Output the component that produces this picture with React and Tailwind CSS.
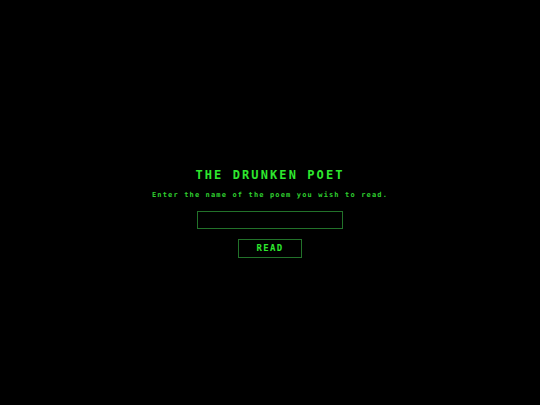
import React, { useState } from 'react';

const App = () => {
  const [poem, setPoem] = useState('');

  return (
    <div className="min-h-screen w-full bg-black flex flex-col items-center pt-[167px] font-['DejaVu_Sans_Mono',monospace]">
      <h1 className="text-[12px] leading-[16px] font-bold tracking-[2.1px] text-[#2ee82e]">
        THE DRUNKEN POET
      </h1>
      <p className="mt-[7px] text-[7px] leading-[10px] font-bold tracking-[1.15px] text-[#2fcf2f]">
        Enter the name of the poem you wish to read.
      </p>
      <input
        value={poem}
        onChange={(e) => setPoem(e.target.value)}
        className="mt-[11px] w-[146px] h-[18px] bg-black border border-[#22722a] outline-none text-[#2ee82e] text-[8px] px-1"
      />
      <button className="mt-[10px] w-[64px] h-[19px] bg-black border border-[#22722a] text-[9px] font-bold tracking-[1.3px] text-[#2ee82e] flex items-center justify-center">
        READ
      </button>
    </div>
  );
};

export default App;
